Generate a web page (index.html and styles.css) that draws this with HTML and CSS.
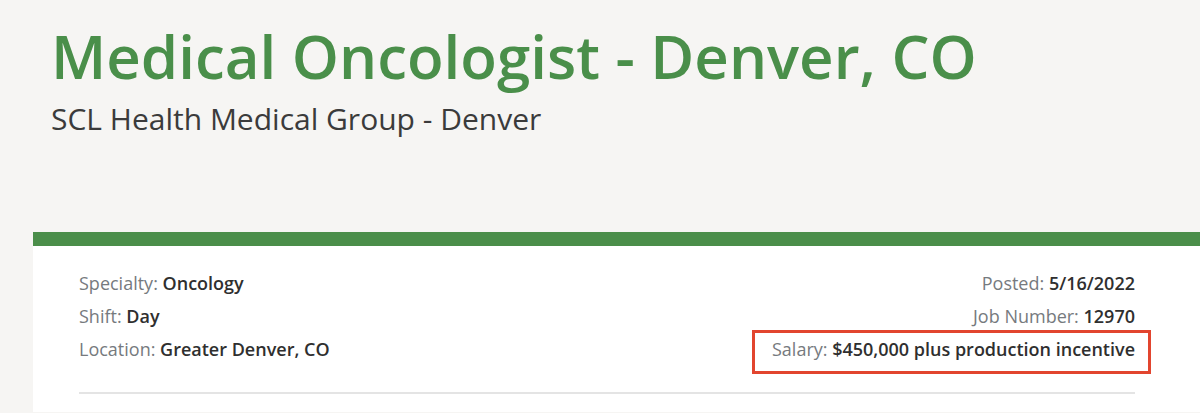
FILE: index.html
```html
<!DOCTYPE html>
<html lang="en">
<head>
<meta charset="utf-8">
<title>Medical Oncologist - Denver, CO</title>
<link rel="stylesheet" href="styles.css">
</head>
<body>
<header class="page-header">
  <h1 class="job-title">Medical Oncologist - Denver, CO</h1>
  <p class="employer">SCL Health Medical Group - Denver</p>
</header>
<main class="card">
  <div class="details">
    <ul class="meta meta-left">
      <li><span class="label">Specialty:</span> <span class="value">Oncology</span></li>
      <li><span class="label">Shift:</span> <span class="value">Day</span></li>
      <li><span class="label">Location:</span> <span class="value">Greater Denver, CO</span></li>
    </ul>
    <ul class="meta meta-right">
      <li><span class="label">Posted:</span> <span class="value">5/16/2022</span></li>
      <li><span class="label">Job Number:</span> <span class="value">12970</span></li>
      <li class="highlight"><span class="label">Salary:</span> <span class="value">$450,000 plus production incentive</span></li>
    </ul>
  </div>
  <hr class="divider">
</main>
</body>
</html>
```
FILE: styles.css
```css
html, body {
  margin: 0;
  padding: 0;
}
body {
  background: #f6f5f3;
  font-family: "Open Sans", Lato, "Liberation Sans", sans-serif;
  height: 413px;
  overflow: hidden;
}
.page-header {
  padding: 20px 0 0 51px;
  height: 210px;
  box-sizing: border-box;
}
.job-title {
  margin: 0;
  font-size: 60px;
  line-height: 72px;
  font-weight: 600;
  color: #4a8f4a;
}
.employer {
  margin: 8px 0 0;
  font-size: 30px;
  line-height: 38px;
  color: #3b3b3b;
  font-weight: 400;
}
.card {
  margin-left: 33px;
  margin-top: 22px;
  border-top: 14px solid #4b8e4a;
  background: #ffffff;
  padding: 21px 65px 18px 46px;
}
.details {
  display: flex;
  justify-content: space-between;
}
.meta {
  list-style: none;
  margin: 0;
  padding: 0;
  font-size: 18px;
  line-height: 33px;
}
.meta-right {
  text-align: right;
}
.label {
  color: #767a7e;
}
.value {
  color: #2f2f2f;
  font-weight: 600;
}
.highlight {
  position: relative;
}
.highlight::after {
  content: "";
  position: absolute;
  left: -20px;
  right: -16px;
  top: -3px;
  bottom: -8px;
  border: 3px solid #e2452f;
}
.divider {
  margin: 26px 0 0;
  border: 0;
  border-top: 2px solid #e4e4e4;
}
```
